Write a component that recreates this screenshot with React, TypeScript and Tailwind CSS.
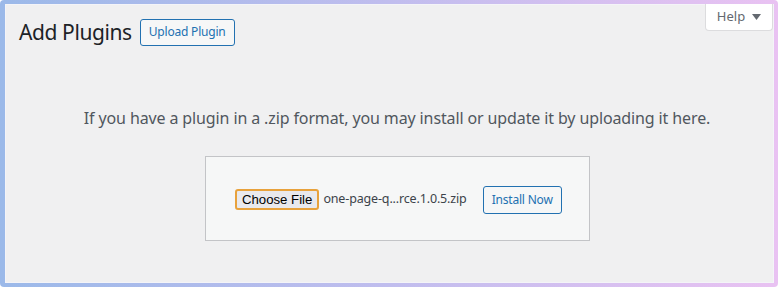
export default function App() {
  const font = { fontFamily: '"Noto Sans", "Open Sans", Arial, sans-serif' };
  return (
    <div className="w-[780px] h-[289px] bg-white" style={font}>
      <div className="w-[778px] h-[287px] rounded-[4px] bg-gradient-to-r from-[#9bb9e9] via-[#c0bdee] to-[#e9c2f2] pl-[5px] pt-[4px] pr-[4px] pb-[4px]">
        <div className="relative w-full h-full bg-[#f0f0f1] border border-[#f4f4f8]">
          <div className="absolute top-[-1px] right-[0px] w-[68px] h-[27px] bg-white border border-t-0 border-[#dcdcde] rounded-b-[4px] flex items-center justify-center gap-[7px] text-[13px] text-[#646970]">
            <span>Help</span>
            <svg width="9" height="6" viewBox="0 0 9 6"><path d="M0 0 L9 0 L4.5 6 Z" fill="#646970" /></svg>
          </div>
          <div className="flex items-center pl-[13px] pt-[13px]">
            <h1 className="text-[21px] leading-[28px] text-[#1d2327] tracking-[-0.4px]">Add Plugins</h1>
            <button className="ml-[8px] h-[27px] px-[8px] border border-[#2271b1] rounded-[3px] bg-[#f6f7f7] text-[#2271b1] text-[12px] leading-none tracking-[-0.2px]">
              Upload Plugin
            </button>
          </div>
          <p className="mt-[62px] pl-[15px] text-center text-[16px] leading-[20px] text-[#50575e] tracking-[-0.12px]">
            If you have a plugin in a .zip format, you may install or update it by uploading it here.
          </p>
          <div className="mt-[28px] ml-[199px] w-[385px] h-[85px] border border-[#c3c4c7] bg-[#f6f7f7] flex items-center pl-[29px] pt-[2px]">
            <div className="flex items-center">
              <div className="h-[21px] px-[5px] border-2 border-[#e8a23c] rounded-[3px] bg-[#e9e9ed] flex items-center text-[13.2px] text-black" style={{ fontFamily: 'Arial, "Liberation Sans", sans-serif' }}>
                Choose File
              </div>
              <span className="ml-[4px] text-[12.5px] text-[#3c434a] tracking-[-0.15px]">one-page-q...rce.1.0.5.zip</span>
              <button className="ml-[16px] h-[28px] px-[8px] border border-[#2271b1] rounded-[3px] bg-[#f6f7f7] text-[#2271b1] text-[12px] leading-none tracking-[-0.2px]">
                Install Now
              </button>
            </div>
          </div>
        </div>
      </div>
    </div>
  );
}
